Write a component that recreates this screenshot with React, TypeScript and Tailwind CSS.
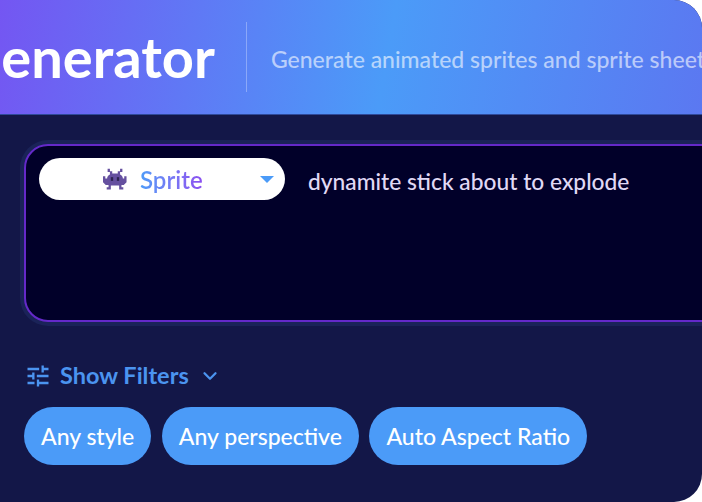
import { ChevronDown } from "lucide-react";
import { MdTune } from "react-icons/md";

const chips = ["Any style", "Any perspective", "Auto Aspect Ratio"];

// the alien monster emoji in the select
const Invader = () => (
  <svg width="24" height="24" viewBox="0 0 26 24">
    <path
      fill="#65509f"
      d="M5 1h2.5v2.5H10V6h6V3.5h2.5V1H21v3.5h-2.5V7c2 1 3 2.5 3 4.5h1.5V9h2.5v6.5l-3 3H20V21h2v2.5h-4.5V19h-9v4.5H4V21h2v-2.5H3l-3-3V9h2.5v2.5H4.5C4.5 9.500 5.500 8 7.500 7V4.500H5z"
    />
    <rect x="8.500" y="10" width="2.500" height="4" fill="#2c2350" />
    <rect x="15" y="10" width="2.500" height="4" fill="#2c2350" />
  </svg>
);

export default function App() {
  return (
    <div className="w-[702px] h-[502px] bg-white overflow-hidden font-['Lato','Liberation_Sans',sans-serif]">
      <div className="h-full rounded-r-[28px] overflow-hidden bg-[#131748]">
        {/* Header */}
        <div className="h-[115px] flex items-center whitespace-nowrap border-b border-[#2f4a9a] bg-[linear-gradient(100deg,#7456f2_0%,#4b9bf8_55%,#5b78f1_100%)]">
          <h1 className="ml-[-39px] text-[56px] leading-none font-bold text-white">Generator</h1>
          <div className="ml-[31px] h-[70px] w-px shrink-0 bg-white/30" />
          <p className="ml-[24px] mt-[5px] text-[23px] font-medium text-white/60">Generate animated sprites and sprite sheets</p>
        </div>

        {/* Prompt box */}
        <div className="mt-[29px] ml-[24px] mr-[-40px] h-[178px] rounded-[24px] border-2 border-[#6429c9] bg-[#010029] shadow-[0_0_0_4px_#1a2358] pl-[13px] pt-[12px] flex items-start">
          <div className="w-[246px] h-[42px] rounded-full bg-white flex items-center pl-[64px] pr-[11px] shrink-0">
            <Invader />
            <span className="ml-[13px] mt-[1px] text-[24px] font-semibold bg-linear-to-r from-[#4b9bf8] to-[#8b4ef0] bg-clip-text text-transparent">
              Sprite
            </span>
            <span className="ml-auto h-0 w-0 border-x-[7px] border-t-[7px] border-x-transparent border-t-[#4b9bf8]" />
          </div>
          <p className="ml-[23px] mt-[11px] text-[22.750px] leading-[26px] font-medium text-[#e0d9f5]">dynamite stick about to explode</p>
        </div>

        {/* Filters */}
        <div className="mt-[42px] ml-[24px] h-[24px] flex items-center text-[#4b94f0]">
          <MdTune className="w-[28px] h-[28px] shrink-0" />
          <span className="ml-[8px] text-[23.500px] font-bold leading-none">Show Filters</span>
          <ChevronDown className="ml-[10px] w-[22px] h-[22px]" strokeWidth={2.5} />
        </div>

        <div className="mt-[19px] ml-[24px] flex gap-[10.500px]">
          {chips.map((c) => (
            <span key={c} className="h-[58px] px-[17px] flex items-center rounded-full bg-[#4b9bf8] text-white text-[23px] font-medium">
              {c}
            </span>
          ))}
        </div>
      </div>
    </div>
  );
}
